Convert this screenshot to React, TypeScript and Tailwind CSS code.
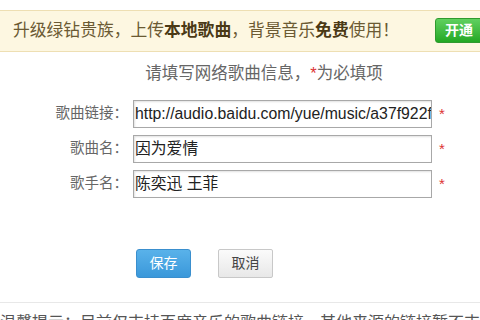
import React from 'react'

const cn = { fontFamily: '"Liberation Sans", "Noto Sans CJK SC", sans-serif' }

const fields = [
  { label: '歌曲链接：', value: 'http://audio.baidu.com/yue/music/a37f922f9b3a' },
  { label: '歌曲名：', value: '因为爱情' },
  { label: '歌手名：', value: '陈奕迅 王菲' },
]

export default function App() {
  return (
    <div className="w-[480px] h-[320px] overflow-hidden bg-white" style={cn}>
      {/* Upgrade banner */}
      <div className="mt-[10px] h-[42px] flex items-center border-y border-[#eedfb3] bg-[#fdf7e1] pl-[13px]">
        <span className="text-[16.8px] text-[#6b5a33] whitespace-nowrap">
          升级绿钻贵族，上传<b className="text-[#4a3915]">本地歌曲</b>，背景音乐<b className="text-[#4a3915]">免费</b>使用！
        </span>
        <div className="ml-auto mr-[-20px] shrink-0 w-[65px] h-[25px] mt-[-2px] rounded-l-[3px] border border-[#2f9a2f] bg-gradient-to-b from-[#5fd05f] to-[#22a822] text-white text-[14px] font-bold flex items-center pl-[9px]">
          开通
        </div>
      </div>

      {/* Hint */}
      <div className="mt-[11px] h-[20px] pl-[48px] text-center text-[16.5px] leading-[20px] text-[#666]">
        请填写网络歌曲信息，<span className="text-[#d33]">*</span>为必填项
      </div>

      {/* Form */}
      <div className="mt-[17px] flex flex-col gap-[7px]">
        {fields.map((f) => (
          <div key={f.label} className="flex items-center h-[28px]">
            <label className="w-[128px] text-right text-[14.5px] text-[#666] whitespace-nowrap">{f.label}</label>
            <div className="ml-[5px] w-[299px] h-[28px] border border-[#a8a8a8] shadow-[inset_1px_1px_2px_rgba(0,0,0,0.12)] flex items-center overflow-hidden pl-[1px]">
              <span className="text-[15.8px] text-[#222] whitespace-nowrap">{f.value}</span>
            </div>
            <span className="ml-[7px] text-[#d33] text-[15px]">*</span>
          </div>
        ))}
      </div>

      {/* Buttons */}
      <div className="mt-[51px] flex gap-[27px] pl-[136px]">
        <button className="w-[55px] h-[29px] rounded-[3px] bg-gradient-to-b from-[#59b2ea] to-[#3a98da] border border-[#3a8fce] text-white text-[14px]">
          保存
        </button>
        <button className="w-[55px] h-[29px] rounded-[2px] bg-gradient-to-b from-[#fbfbfb] to-[#e8e8e8] border border-[#c8c8c8] text-[#444] text-[14px]">
          取消
        </button>
      </div>

      {/* Footer tip */}
      <div className="mt-[24px] border-t border-[#e8e8e8] pt-[8px] text-[16px] text-[#555] whitespace-nowrap">
        温馨提示：目前仅支持百度音乐的歌曲链接，其他来源的链接暂不支持。
      </div>
    </div>
  )
}
